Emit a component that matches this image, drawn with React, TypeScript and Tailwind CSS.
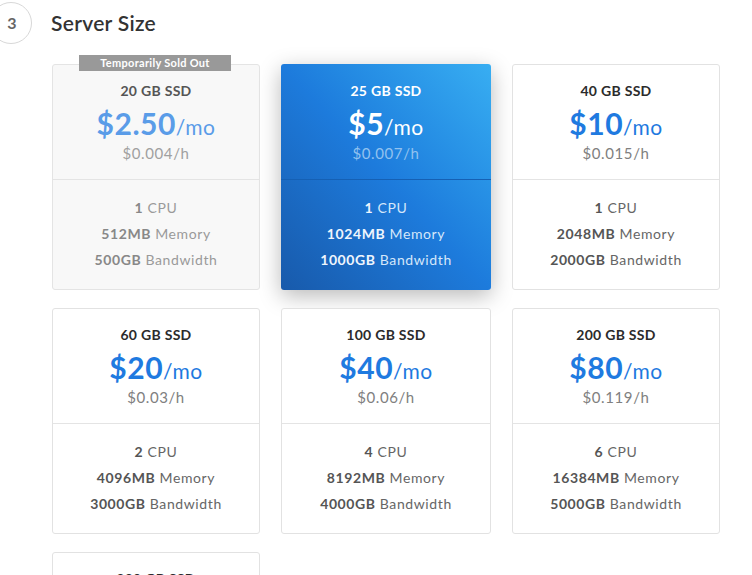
import React from "react";

type Plan = {
  disk: string;
  price: string;
  hourly: string;
  cpu: string;
  memory: string;
  bandwidth: string;
  soldOut?: boolean;
  selected?: boolean;
};

const plans: Plan[] = [
  { disk: "20 GB SSD", price: "$2.50", hourly: "$0.004/h", cpu: "1", memory: "512MB", bandwidth: "500GB", soldOut: true },
  { disk: "25 GB SSD", price: "$5", hourly: "$0.007/h", cpu: "1", memory: "1024MB", bandwidth: "1000GB", selected: true },
  { disk: "40 GB SSD", price: "$10", hourly: "$0.015/h", cpu: "1", memory: "2048MB", bandwidth: "2000GB" },
  { disk: "60 GB SSD", price: "$20", hourly: "$0.03/h", cpu: "2", memory: "4096MB", bandwidth: "3000GB" },
  { disk: "100 GB SSD", price: "$40", hourly: "$0.06/h", cpu: "4", memory: "8192MB", bandwidth: "4000GB" },
  { disk: "200 GB SSD", price: "$80", hourly: "$0.119/h", cpu: "6", memory: "16384MB", bandwidth: "5000GB" },
  { disk: "320 GB SSD", price: "$160", hourly: "$0.238/h", cpu: "8", memory: "32768MB", bandwidth: "6000GB" },
];

const PlanCard = ({ plan }: { plan: Plan }) => {
  if (plan.selected) {
    return (
      <div className="relative h-[226px] rounded-[3px] bg-gradient-to-tr from-[#185aab] via-[#1d7bdc] to-[#38aef2] text-white shadow-[0_6px_22px_rgba(0,0,0,0.28)]">
        <div className="flex h-[116px] flex-col items-center border-b border-[#1560b4] pt-[17px]">
          <div className="text-[14px] font-bold leading-[20px] tracking-[0.3px]">{plan.disk}</div>
          <div className="mt-[6px] flex items-baseline leading-[32px]">
            <span className="text-[30px] font-bold tracking-[0.5px]">{plan.price}</span>
            <span className="text-[21px] tracking-[0.5px]">/mo</span>
          </div>
          <div className="text-[15px] leading-[20px] tracking-[0.6px] text-[#92c2ef]">{plan.hourly}</div>
        </div>
        <div className="flex flex-col items-center pt-[15px] text-[14px] leading-[26px] tracking-[0.6px] text-[#d5e7fa]">
          <div><b className="text-[#eef5fd]">{plan.cpu}</b> CPU</div>
          <div><b className="text-[#eef5fd]">{plan.memory}</b> Memory</div>
          <div><b className="text-[#eef5fd]">{plan.bandwidth}</b> Bandwidth</div>
        </div>
      </div>
    );
  }
  const sold = plan.soldOut;
  return (
    <div
      className={
        sold
          ? "relative h-[226px] rounded-[3px] border border-[#e4e4e4] bg-[#f8f8f8]"
          : "relative h-[226px] rounded-[3px] border border-[#e2e2e2] bg-white"
      }
    >
      {sold && (
        <div className="absolute left-[26px] top-[-10px] w-[152px] bg-[#999999] text-center text-[11px] font-bold leading-[16px] tracking-[0.3px] text-white">
          Temporarily Sold Out
        </div>
      )}
      <div className="flex h-[115px] flex-col items-center border-b border-[#e4e4e4] pt-[16px]">
        <div className={sold ? "text-[14px] font-bold leading-[20px] tracking-[0.3px] text-[#555]" : "text-[14px] font-bold leading-[20px] tracking-[0.3px] text-[#2b2b2b]"}>
          {plan.disk}
        </div>
        <div className={sold ? "mt-[6px] flex items-baseline leading-[32px] text-[#5a9ce8]" : "mt-[6px] flex items-baseline leading-[32px] text-[#1f7ae0]"}>
          <span className="text-[30px] font-bold tracking-[0.5px]">{plan.price}</span>
          <span className="text-[21px] tracking-[0.5px]">/mo</span>
        </div>
        <div className={sold ? "text-[15px] leading-[20px] tracking-[0.6px] text-[#a0a0a0]" : "text-[15px] leading-[20px] tracking-[0.6px] text-[#808080]"}>
          {plan.hourly}
        </div>
      </div>
      <div className={sold ? "flex flex-col items-center pt-[15px] text-[14px] leading-[26px] tracking-[0.6px] text-[#9a9a9a]" : "flex flex-col items-center pt-[15px] text-[14px] leading-[26px] tracking-[0.6px] text-[#666]"}>
        <div><b className={sold ? "text-[#888]" : "text-[#555]"}>{plan.cpu}</b> CPU</div>
        <div><b className={sold ? "text-[#888]" : "text-[#555]"}>{plan.memory}</b> Memory</div>
        <div><b className={sold ? "text-[#888]" : "text-[#555]"}>{plan.bandwidth}</b> Bandwidth</div>
      </div>
    </div>
  );
};

export default function App() {
  return (
    <div className="h-[575px] w-[752px] overflow-hidden bg-white font-['Lato','Liberation_Sans',sans-serif]">
      <div className="flex h-[46px] items-center">
        <div className="ml-[-10px] flex h-[42px] w-[42px] shrink-0 items-center justify-center rounded-full border border-[#d8d8d8] pl-[2px] text-[16px] font-bold text-[#666]">
          3
        </div>
        <h2 className="ml-[19px] text-[21px] font-semibold tracking-[0.3px] text-[#333]">Server Size</h2>
      </div>
      <div className="ml-[52px] mt-[18px] grid grid-cols-[208px_210px_208px] gap-x-[21px] gap-y-[18px]">
        {plans.map((plan) => (
          <PlanCard key={plan.disk} plan={plan} />
        ))}
      </div>
    </div>
  );
}
